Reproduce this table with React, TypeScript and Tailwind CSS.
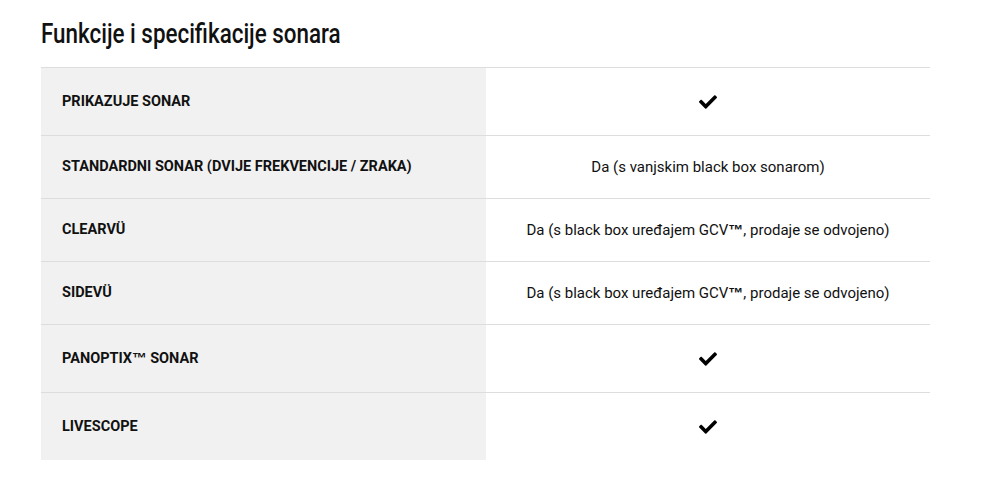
import React from "react";
import { FaCheck } from "react-icons/fa";

type Row = { label: React.ReactNode; value: React.ReactNode | null };

const TM = () => (
  <span className="font-bold" style={{ fontFamily: "'Liberation Sans', Arial, sans-serif" }}>™</span>
);

const rows: Row[] = [
  { label: "PRIKAZUJE SONAR", value: null },
  { label: "STANDARDNI SONAR (DVIJE FREKVENCIJE / ZRAKA)", value: "Da (s vanjskim black box sonarom)" },
  { label: "CLEARVÜ", value: <>Da (s black box uređajem GCV<TM />, prodaje se odvojeno)</> },
  { label: "SIDEVÜ", value: <>Da (s black box uređajem GCV<TM />, prodaje se odvojeno)</> },
  { label: <>PANOPTIX<TM /> SONAR</>, value: null },
  { label: "LIVESCOPE", value: null },
];

export default function App() {
  return (
    <div className="bg-white w-[983px] h-[498px] pl-[41px] pt-[17px]" style={{ fontFamily: "Roboto, 'Liberation Sans', sans-serif" }}>
      <h2
        className="text-[28px] leading-[34px] text-[#111] mb-[16px] whitespace-nowrap font-medium"
        style={{ fontFamily: "Roboto, sans-serif", transform: "scaleX(0.8)", transformOrigin: "left center" }}
      >
        Funkcije i specifikacije sonara
      </h2>
      <div className="w-[889px]">
        {rows.map((r, i) => (
          <div key={i} className="flex border-t border-[#dddddd]">
            <div className={`w-[445px] bg-[#f1f1f1] pl-[21px] flex items-center font-bold text-[14.5px] text-[#111] ${r.value ? "h-[62px]" : "h-[67px]"}`}>
              <span>{r.label}</span>
            </div>
            <div className="flex-1 flex items-center justify-center text-[15px] text-[#111]">
              {r.value ? <span>{r.value}</span> : <FaCheck className="w-[18px] h-[18px] text-black" />}
            </div>
          </div>
        ))}
      </div>
    </div>
  );
}
